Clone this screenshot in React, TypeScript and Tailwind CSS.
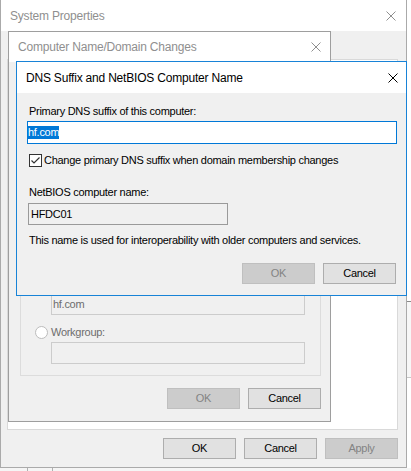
import clsx from "clsx";
import type { ReactNode } from "react";

function CloseX({ className }: { className: string }) {
  return (
    <svg width="10" height="10" viewBox="0 0 10 10" className={clsx("shrink-0", className)} fill="none">
      <path d="M0.5 0.5L9.5 9.5M9.5 0.5L0.5 9.5" strokeWidth="1" />
    </svg>
  );
}

function Btn({ children, disabled }: { children: ReactNode; disabled?: boolean }) {
  return (
    <button
      type="button"
      className={clsx(
        "flex h-[21px] w-[73px] items-center justify-center border text-[11px] leading-none",
        disabled ? "border-[#bfbfbf] bg-[#cccccc] text-[#838383]" : "border-[#adadad] bg-[#e1e1e1] text-black"
      )}
    >
      {children}
    </button>
  );
}

function Radio({ checked }: { checked?: boolean }) {
  return (
    <span className="flex h-[13px] w-[13px] shrink-0 items-center justify-center rounded-full border border-[#bcbcbc] bg-white">
      {checked && <span className="h-[5px] w-[5px] rounded-full bg-[#bcbcbc]" />}
    </span>
  );
}

function SystemProperties() {
  return (
    <div className="flex h-[468px] w-[407px] shrink-0 flex-col border-x border-b border-[#aaaaaa] bg-[#f0f0f0]">
      <div className="flex h-[31px] shrink-0 items-center justify-between bg-white pl-[9px] pr-[10px]">
        <span className="text-[12px] tracking-[-0.2px] text-[#8f8f8f]">System Properties</span>
        <CloseX className="stroke-[#8f8f8f]" />
      </div>
      <div className="flex flex-1 flex-col pl-[6px] pr-[8px]">
        <div className="h-[28px] shrink-0" />
        <div className="flex-1 border border-[#d9d9d9] bg-white" />
        <div className="flex justify-end gap-[8px] py-[8px]">
          <Btn>OK</Btn>
          <Btn>Cancel</Btn>
          <Btn disabled>Apply</Btn>
        </div>
      </div>
    </div>
  );
}

function DomainChanges() {
  return (
    <div className="absolute left-[8px] top-[31px] flex h-[391px] w-[323px] flex-col border border-[#9e9e9e] bg-[#f0f0f0]">
      <div className="flex h-[30px] shrink-0 items-center justify-between bg-white pl-[9px] pr-[9px]">
        <span className="text-[12px] tracking-[-0.2px] text-[#8f8f8f]">Computer Name/Domain Changes</span>
        <CloseX className="stroke-[#8f8f8f]" />
      </div>
      <div className="flex flex-1 flex-col justify-end overflow-hidden pb-[12px] pl-[11px] pr-[9px]">
        <div className="border border-[#dcdcdc] pb-[11px] pl-[14px]">
          <div className="flex h-[16px] items-center gap-[3px] text-[#6d6d6d]">
            <Radio checked />
            <span>Domain:</span>
          </div>
          <div className="ml-[16px] mt-[3px] flex h-[22px] w-[254px] items-center border border-[#cccccc] bg-[#f0f0f0] pl-[1px] text-[#6d6d6d]">
            hf.com
          </div>
          <div className="mt-[9px] flex h-[16px] items-center gap-[3px] text-[#6d6d6d]">
            <Radio />
            <span>Workgroup:</span>
          </div>
          <div className="ml-[16px] mt-[2px] h-[22px] w-[254px] border border-[#cccccc] bg-[#f0f0f0]" />
        </div>
        <div className="mt-[12px] flex justify-end gap-[8px]">
          <Btn disabled>OK</Btn>
          <Btn>Cancel</Btn>
        </div>
      </div>
    </div>
  );
}

function DnsSuffix() {
  return (
    <div className="absolute left-[16px] top-[61px] flex h-[235px] w-[391px] flex-col border border-[#1883d7] bg-[#f0f0f0] text-black">
      <div className="flex h-[31px] shrink-0 items-center justify-between bg-white pl-[9px] pr-[8px]">
        <span className="text-[12px] tracking-[-0.2px]">DNS Suffix and NetBIOS Computer Name</span>
        <CloseX className="stroke-black" />
      </div>
      <div className="flex flex-1 flex-col px-[10px] pt-[11px]">
        <div className="pl-[2px] leading-[15px]">Primary DNS suffix of this computer:</div>
        <div className="mt-[2px] flex h-[23px] w-[370px] items-center border border-[#0078d7] bg-white">
          <span className="bg-[#0078d7] leading-[13px] text-white">hf.com</span>
        </div>
        <div className="mt-[8px] flex h-[16px] items-center gap-[2px] pl-[2px]">
          <span className="flex h-[13px] w-[13px] shrink-0 items-center justify-center border border-[#333333] bg-white">
            <svg width="11" height="11" viewBox="0 0 11 11" fill="none">
              <path d="M1.5 5.5L4 8L9.5 2.5" stroke="#333333" strokeWidth="1.2" />
            </svg>
          </span>
          <span>Change primary DNS suffix when domain membership changes</span>
        </div>
        <div className="mt-[17px] pl-[2px] leading-[15px]">NetBIOS computer name:</div>
        <div className="ml-[1px] mt-[3px] flex h-[22px] w-[200px] items-center border border-[#9a9a9a] bg-[#f0f0f0] pl-[2px]">
          HFDC01
        </div>
        <div className="mt-[8px] pl-[2px] leading-[15px]">
          This name is used for interoperability with older computers and services.
        </div>
        <div className="mt-[15px] flex justify-end gap-[8px]">
          <Btn disabled>OK</Btn>
          <Btn>Cancel</Btn>
        </div>
      </div>
    </div>
  );
}

export default function App() {
  return (
    <div className="relative flex h-[471px] w-[411px] flex-col overflow-hidden bg-white font-['Liberation_Sans',Arial,sans-serif] text-[11px] tracking-[-0.28px]">
      <div className="flex">
        <SystemProperties />
        <div className="flex w-[4px] flex-col">
          <div className="h-[301px] bg-white" />
          <div className="h-[76px] border-t border-[#8a8a8a] bg-[#f7f7f7]" />
          <div className="flex-1 border-t border-[#c8c8c8] bg-white" />
        </div>
      </div>
      <div className="flex h-[3px] bg-[#f5f5f5]">
        <div className="ml-[27px] w-px bg-[#b0b0b0]" />
        <div className="ml-[24px] w-px bg-[#b0b0b0]" />
      </div>
      <DomainChanges />
      <DnsSuffix />
    </div>
  );
}
